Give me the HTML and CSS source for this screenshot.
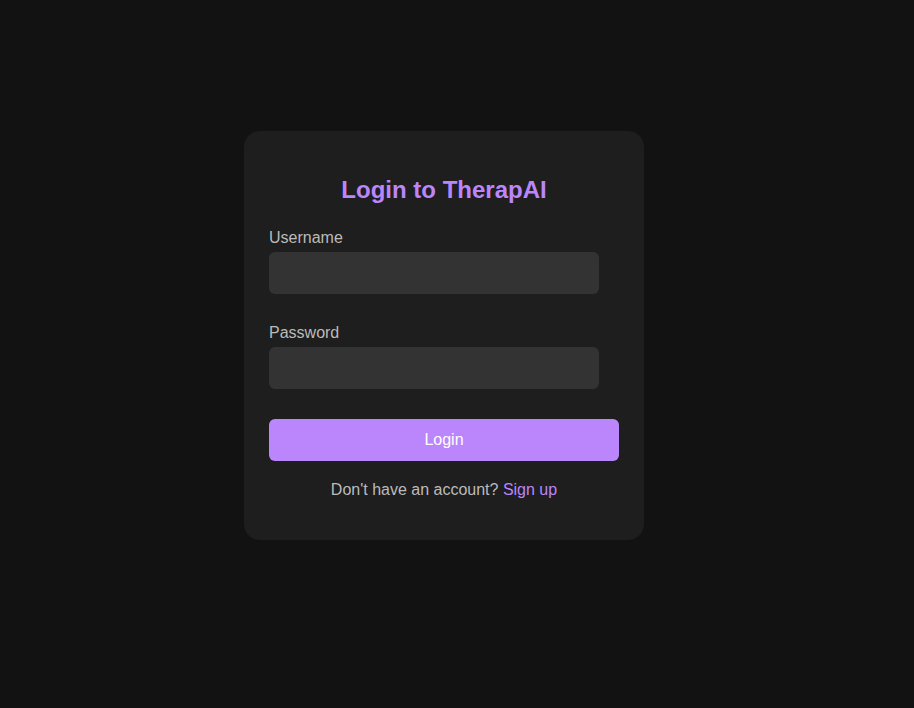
FILE: index.html
```html
<!DOCTYPE html>
<html>
<head>
<meta charset="utf-8">
<link rel="stylesheet" href="styles.css">
</head>
<body>
<div class="page">
  <div class="card">
    <h2 class="title">Login to TherapAI</h2>
    <form class="form">
      <label class="label" for="u">Username</label>
      <input class="input" id="u" type="text">
      <label class="label label-second" for="p">Password</label>
      <input class="input" id="p" type="password">
      <button class="btn" type="button">Login</button>
    </form>
    <p class="foot">Don't have an account? <a class="link" href="#">Sign up</a></p>
  </div>
</div>
</body>
</html>
```

FILE: styles.css
```css
html, body {
  margin: 0;
  padding: 0;
  background: #121212;
  font-family: "Liberation Sans", Arial, sans-serif;
}
.page {
  min-height: 708px;
  box-sizing: border-box;
  padding: 131px 0 0 244px;
}
.card {
  width: 400px;
  box-sizing: border-box;
  background: #1e1e1e;
  border-radius: 16px;
  padding: 25px 25px 25px;
}
.title {
  margin: 20px 0 25px;
  font-size: 24px;
  line-height: 28px;
  font-weight: bold;
  color: #bb86fc;
  text-align: center;
}
.form {
  display: flex;
  flex-direction: column;
  align-items: flex-start;
  margin: 0;
}
.label {
  font-size: 16px;
  line-height: 18px;
  color: #bbbbbb;
  margin-bottom: 5px;
}
.label-second {
  margin-top: 30px;
}
.input {
  width: 330px;
  height: 42px;
  box-sizing: border-box;
  background: #333333;
  border: none;
  border-radius: 6px;
  padding: 10px;
  color: #fff;
  font-size: 16px;
  font-family: inherit;
  outline: none;
}
.btn {
  margin-top: 30px;
  width: 350px;
  height: 42px;
  background: #bb86fc;
  border: none;
  border-radius: 6px;
  color: #ffffff;
  font-size: 16px;
  font-family: inherit;
  cursor: pointer;
}
.foot {
  margin: 20px 0 16px;
  text-align: center;
  font-size: 16px;
  line-height: 18px;
  color: #bbbbbb;
}
.link {
  color: #bb86fc;
  text-decoration: none;
}
```
